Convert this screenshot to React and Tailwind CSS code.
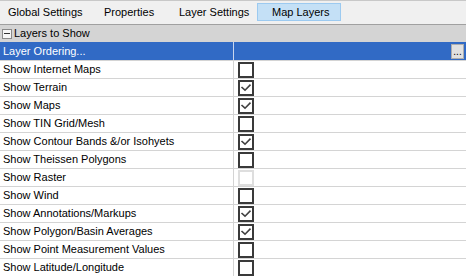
import React from "react";

const rows = [
  ["Show Internet Maps", "off"],
  ["Show Terrain", "on"],
  ["Show Maps", "on"],
  ["Show TIN Grid/Mesh", "off"],
  ["Show Contour Bands &/or Isohyets", "on"],
  ["Show Theissen Polygons", "off"],
  ["Show Raster", "disabled"],
  ["Show Wind", "off"],
  ["Show Annotations/Markups", "on"],
  ["Show Polygon/Basin Averages", "on"],
  ["Show Point Measurement Values", "off"],
  ["Show Latitude/Longitude", "off"],
];

function Check({ state }) {
  if (state === "disabled") {
    return <div className="w-[16px] h-[16px] border-2 border-[#dedede] bg-white" />;
  }
  return (
    <div className="w-[16px] h-[16px] border-2 border-[#3a3a3a] bg-white relative">
      {state === "on" && (
        <svg width="12" height="12" viewBox="0 0 12 12" className="absolute left-0 top-0">
          <polyline points="1.5,5 5,8.2 10.5,2.6" fill="none" stroke="#404040" strokeWidth="1.6" />
        </svg>
      )}
    </div>
  );
}

export default function App() {
  return (
    <div
      className="w-[466px] h-[276px] overflow-hidden bg-white text-[11px] text-black"
      style={{ fontFamily: '"Liberation Sans", Arial, sans-serif' }}
    >
      {/* Tab bar */}
      <div className="h-[25px] bg-[#f0f0f0] border-b border-[#a0a0a0] border-t border-t-[#c8c8c8] flex items-start pl-[8px] pt-[2px] text-[11px]">
        <div className="w-[96px] h-[18px] flex items-center">Global Settings</div>
        <div className="w-[75px] h-[18px] flex items-center">Properties</div>
        <div className="w-[78px] h-[18px] flex items-center">Layer Settings</div>
        <div className="w-[84px] h-[18px] flex items-center pl-[14px] bg-[#c4e0f6] border border-[#9ccaf0]">Map Layers</div>
      </div>

      {/* Category header */}
      <div className="h-[17px] bg-[#d4d4d4] flex items-center pl-[2px]">
        <div className="w-[10px] h-[10px] border border-[#8a8a8a] bg-[#f6f6f6] flex items-center justify-center">
          <div className="w-[6px] h-[1px] bg-[#333]" />
        </div>
        <span className="ml-[2px]">Layers to Show</span>
      </div>

      {/* Selected row */}
      <div className="h-[19px] flex border-b border-[#d4d4d4] bg-[#316ac5] text-white">
        <div className="w-[234px] border-r border-[#c9d6ee] pl-[3px] flex items-center">Layer Ordering...</div>
        <div className="flex-1 flex justify-end items-center pr-[2px]">
          <div className="w-[13px] h-[15px] bg-[#e1e1e1] border border-[#adadad] text-black text-[10px] leading-[10px] flex items-end justify-center pb-[1px]">...</div>
        </div>
      </div>

      {rows.map(([label, state]) => (
        <div key={label} className="h-[18px] flex border-b border-[#d4d4d4]">
          <div className="w-[234px] border-r border-[#d4d4d4] pl-[3px] flex items-center">{label}</div>
          <div className="flex-1 flex items-center pl-[4px]">
            <Check state={state} />
          </div>
        </div>
      ))}
    </div>
  );
}
